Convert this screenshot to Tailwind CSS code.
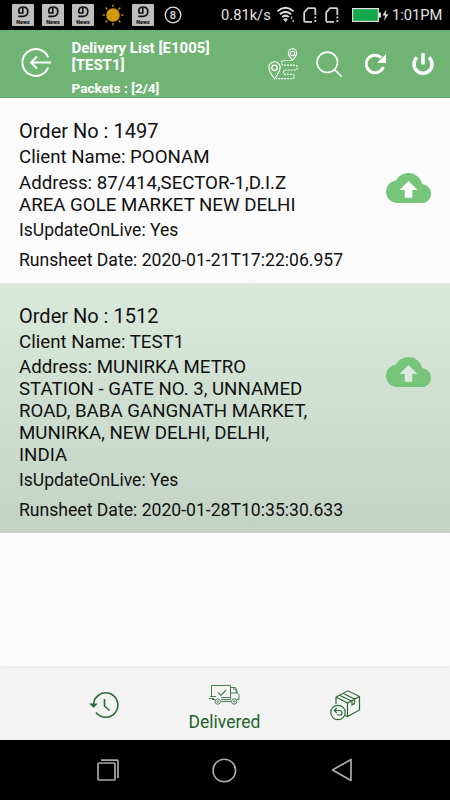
<!DOCTYPE html>
<html lang="en">
<head>
<meta charset="utf-8">
<title>Delivery List</title>
<script src="https://cdn.jsdelivr.net/npm/@tailwindcss/browser@4"></script>
</head>
<body class="w-[450px] h-[800px] overflow-hidden bg-[#fafafa] font-[Roboto,sans-serif] text-[#111]">
<svg class="hidden">
  <symbol id="news" viewBox="0 0 22 22">
    <rect width="22" height="22" rx="1" fill="#bdbdbd"/>
    <path d="M7.500 9.500C5.500 6 7.500 3 10.800 3c3.200 0 5 2 5 4.500S14 12.300 11 12.300H6.300M10.800 4v5H7.500" fill="none" stroke="#111" stroke-width="1.700"/>
    <text x="11" y="19.500" text-anchor="middle" textLength="13.500" lengthAdjust="spacingAndGlyphs" font-size="5.500" font-weight="900" fill="#111">News</text>
  </symbol>
  <symbol id="cloud" viewBox="0 0 24 16">
    <path d="M19.350 6.040C18.670 2.590 15.640 0 12 0 9.110 0 6.600 1.640 5.350 4.040 2.340 4.360 0 6.910 0 10c0 3.310 2.690 6 6 6h13c2.760 0 5-2.240 5-5 0-2.640-2.050-4.780-4.650-4.960z" fill="#76c57b"/>
    <path d="M14 9v4.200h-4V9H7.200L12 4.200 16.800 9z" fill="currentColor"/>
  </symbol>
</svg>
<div class="flex flex-col h-full">
  <div class="h-[30px] bg-black flex items-center shrink-0 text-[#e2e2e2]">
    <div class="flex items-center gap-2 pl-3">
      <svg class="size-[22px]"><use href="#news"/></svg>
      <svg class="size-[22px]"><use href="#news"/></svg>
      <svg class="size-[22px]"><use href="#news"/></svg>
      <svg class="size-[22px]" viewBox="0 0 22 22"><circle cx="11" cy="11" r="6.800" fill="#cf9a0b"/><path d="M11 .5v2.500M11 19v2.500M.5 11H3M19 11h2.500M3.600 3.600l1.800 1.800M16.600 16.600l1.800 1.800M3.600 18.400l1.800-1.800M16.600 5.400l1.800-1.800" stroke="#a8780c" stroke-width="1.500"/></svg>
      <svg class="size-[22px]"><use href="#news"/></svg>
      <svg class="size-[18px] ml-[1.500px]" viewBox="0 0 18 18"><circle cx="9" cy="9" r="7.800" fill="none" stroke="#ddd" stroke-width="1.300"/><text x="9" y="13" text-anchor="middle" font-size="11" font-weight="500" fill="#ddd">8</text></svg>
    </div>
    <span class="ml-[39.500px] w-[50px] text-[14.700px] whitespace-nowrap">0.81k/s</span>
    <svg class="w-[20px] h-[18px] ml-[5px]" viewBox="0 0 20 18"><path d="M1.500 5.200Q9.500-1.600 17.500 5.200M3.800 8.200q5.700-4.700 11.400 0M6.200 11q3.300-2.700 6.600 0" fill="none" stroke="#ddd" stroke-width="2"/><path d="M7 13.200q2.500-1.800 5 0L9.500 16z" fill="#ddd"/><path d="M15.600 10.500v2.500M17.200 13.800v2.200" stroke="#aaa" stroke-width="1.400"/></svg>
    <svg class="w-[14px] h-[16px] ml-[7px]" viewBox="0 0 14 16"><path d="M9 14.800H2.200Q1.200 14.800 1.200 13.800V5.300L5 1.200h6.500q.8 0 .8.800v6M12.300 9.500v2M12.300 13v2" fill="none" stroke="#d0d0d0" stroke-width="1.800"/></svg>
    <svg class="w-[14px] h-[16px] ml-[8px]" viewBox="0 0 14 16"><path d="M9 14.800H2.200Q1.200 14.800 1.200 13.800V5.300L5 1.200h6.500q.8 0 .8.800v6M12.300 9.500v2M12.300 13v2" fill="none" stroke="#d0d0d0" stroke-width="1.800"/></svg>
    <svg class="w-[37px] h-[14px] ml-[13px]" viewBox="0 0 37 14"><rect x=".6" y=".6" width="25.800" height="12.800" fill="#12a84c" stroke="#ddd" stroke-width="1.200"/><path d="M27 4.500h2v5h-2z" fill="#ddd"/><path d="M34.500 1l-4 6.500h2.600L32 13l4.500-6.800h-2.800z" fill="#ddd"/></svg>
    <span class="ml-[3px] text-[14.700px] whitespace-nowrap">1:01PM</span>
  </div>

  <header class="h-[68px] shrink-0 bg-[#70b474] border-b border-[#5fa765] flex text-white">
    <svg class="w-[32px] h-[32px] ml-[20px] mt-[17px]" viewBox="0 0 32 32" fill="none" stroke="#fff" stroke-width="2"><path d="M28.200 10.500A13.400 13.400 0 1 0 28.200 20.500M31 15.500H11M17 9.500l-6 6 6 6"/></svg>
    <div class="ml-[19.500px] pt-[10px] w-[180px] font-bold whitespace-nowrap shrink-0">
      <div class="text-[15px] leading-[17px]">Delivery List [E1005]<br>[TEST1]</div>
      <div class="text-[13.600px] leading-[16px] mt-[6px]">Packets : [2/4]</div>
    </div>
    <svg class="w-[32px] h-[34px] ml-[15px] mt-[18px]" viewBox="0 0 32 34" fill="none" stroke="#fff" stroke-width="1.100"><path d="M7.500 31C4 26 1.800 22.800 1.800 19.500a5.700 5.700 0 0 1 11.400 0C13.200 22.800 11 26 7.500 31z"/><circle cx="7.500" cy="19.800" r="2.700" stroke-width="1.300"/><path d="M25.500 12.500c-2.600-3.500-4.200-5.200-4.200-7.500a4.200 4.200 0 0 1 8.400 0c0 2.300-1.600 4-4.200 7.500z"/><circle cx="25.500" cy="5.500" r="2.200"/><path d="M24.500 12.500H17q-2.500 0-2.500 2.300t2.500 2.400h11q2.300 0 2.300 2.400T28 22H18.500q-2 0-2 2.200t2 2.200H25q2.300 0 2.300 2.100T25 30.700H9" stroke-dasharray="2 1" stroke-width="1.200"/></svg>
    <svg class="w-[27px] h-[27px] ml-[17.500px] mt-[21px]" viewBox="0 0 27 27" fill="none" stroke="#fff" stroke-width="1.600"><circle cx="11.300" cy="11.300" r="10.200"/><path d="M18.500 18.500l7.300 7.300"/></svg>
    <svg class="w-[21px] h-[22px] ml-[22px] mt-[23px]" viewBox="0 0 21 22"><path d="M18.300 14A8.800 8.800 0 1 1 16.300 4.800" fill="none" stroke="#fff" stroke-width="3"/><path d="M21 1v9h-9z" fill="#fff"/></svg>
    <svg class="w-[22px] h-[22px] ml-[26px] mt-[23px]" viewBox="0 0 22 22" fill="none" stroke="#fff" stroke-width="3.500"><path d="M11 0v11.500"/><path d="M5 4.500A9 9 0 1 0 17 4.500"/></svg>
  </header>

  <main class="grow">
    <article class="h-[184.500px] pl-[19px] pt-[20px] pr-[19px] flex justify-between">
      <div class="w-[330px] whitespace-nowrap">
        <h2 class="text-[20px] leading-[26px]">Order No : 1497</h2>
        <p class="text-[18.680px] leading-[26px]">Client Name: POONAM</p>
        <p class="text-[18.680px] leading-[22px] mt-[2px]">Address: 87/414,SECTOR-1,D.I.Z<br>AREA GOLE MARKET NEW DELHI</p>
        <p class="text-[17.500px] leading-[26px] mt-[1px]">IsUpdateOnLive: Yes</p>
        <p class="text-[17.600px] leading-[26px] mt-[4px]">Runsheet Date: 2020-01-21T17:22:06.957</p>
      </div>
      <svg class="w-[45px] h-[30px] mt-[55px] text-white"><use href="#cloud"/></svg>
    </article>
    <article class="h-[250.500px] pl-[19px] pt-[20.500px] pr-[19px] flex justify-between bg-linear-to-b from-[#d9eadc] to-[#c3d3c5]">
      <div class="w-[330px] whitespace-nowrap">
        <h2 class="text-[20px] leading-[26px]">Order No : 1512</h2>
        <p class="text-[18.680px] leading-[26px]">Client Name: TEST1</p>
        <p class="text-[18.680px] leading-[22px] mt-[1px]">Address: MUNIRKA METRO<br>STATION - GATE NO. 3, UNNAMED<br>ROAD, BABA GANGNATH MARKET,<br>MUNIRKA, NEW DELHI, DELHI,<br>INDIA</p>
        <p class="text-[17.500px] leading-[26px] mt-[1px]">IsUpdateOnLive: Yes</p>
        <p class="text-[17.600px] leading-[26px] mt-[4px]">Runsheet Date: 2020-01-28T10:35:30.633</p>
      </div>
      <svg class="w-[45px] h-[30px] mt-[54px] text-[#dbeade]"><use href="#cloud"/></svg>
    </article>
  </main>

  <nav class="h-[72px] shrink-0 bg-[#f3f3f3] shadow-[0_-1px_3px_rgba(0,0,0,0.1)] flex text-[#1f642a]">
    <div class="w-[164px] pl-[89px] pt-[23px]">
      <svg class="w-[31px] h-[28px]" viewBox="0 0 31 28" fill="none" stroke="#2d6a34" stroke-width="1.600"><path d="M4.500 13.500A12.200 12.200 0 1 1 7 21.500M15.500 8v7l5 4.500"/><path d="M0 12.500h9L4.500 16.800z" fill="#2d6a34" stroke="none"/></svg>
    </div>
    <div class="w-[121px] flex flex-col items-center pt-[16px]">
      <svg class="w-[31px] h-[21px]" viewBox="0 0 31 21" fill="none" stroke="#4c8053" stroke-width="1"><path d="M2.500 12V1.500h19V15.500H12M6 15.500H3M21.500 3.500h5l2 5.500 1.500 1.500v5h-2M21.500 9h7M24 5h2.500l1 4M1 12.500h6M0 14.500h5M12 17.500h10M12 13.500h10"/><path d="M9 8.500l3 3 5-5.500" stroke-width="1.200"/><circle cx="8.700" cy="17.500" r="2.700"/><circle cx="25.200" cy="17.500" r="2.700"/><circle cx="8.700" cy="17.500" r=".7"/><circle cx="25.200" cy="17.500" r=".7"/></svg>
      <span class="text-[17.500px] leading-[22px] mt-[6px]">Delivered</span>
    </div>
    <div class="pl-[45px] pt-[22px]">
      <svg class="w-[31px] h-[31px]" viewBox="0 0 31 31" fill="none" stroke="#2d6a34" stroke-width="1.200"><path d="M6 14V7L18 .8 29.500 6.500V20L17.500 26.500 15 25.500M6 7l11.500 6L29.500 6.500M17.500 13v13.500M9.500 5.200l12.500 6M13 3.300l12 6M22 11v4l2.500-1.400v-4"/><circle cx="8" cy="22.500" r="7.200"/><path d="M4.500 20.500H10q2 0 2 2.300T10 25H7M6.800 18l-2.500 2.500 2.500 2.500"/></svg>
    </div>
  </nav>

  <div class="h-[60px] shrink-0 bg-black flex items-center">
    <svg class="w-[22px] h-[22px] ml-[97px]" viewBox="0 0 22 22" fill="none" stroke="#aaa" stroke-width="1.700"><rect x="1" y="4" width="17" height="17" rx="1"/><path d="M4 1.200h16q1 0 1 1V19"/></svg>
    <svg class="w-[25px] h-[25px] ml-[93px]" viewBox="0 0 25 25" fill="none" stroke="#aaa" stroke-width="1.600"><circle cx="12.300" cy="12.500" r="11.300"/></svg>
    <svg class="w-[22px] h-[24px] ml-[94px]" viewBox="0 0 22 24" fill="none" stroke="#aaa" stroke-width="1.700" stroke-linejoin="round"><path d="M20 1.500v21L1.500 12z"/></svg>
  </div>
</div>
</body>
</html>
